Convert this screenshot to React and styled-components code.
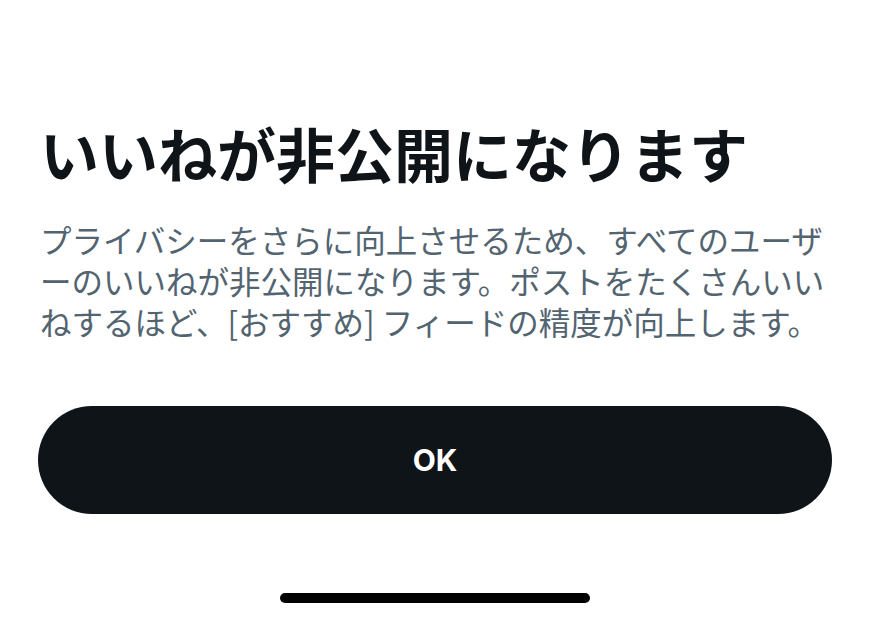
import React from 'react';
import styled, { createGlobalStyle } from 'styled-components';

const GlobalStyle = createGlobalStyle`
  html, body {
    margin: 0;
    padding: 0;
    background: #ffffff;
  }
  body {
    font-family: "Noto Sans CJK JP", "Noto Sans", sans-serif;
    -webkit-font-smoothing: antialiased;
  }
`;

const Screen = styled.div`
  width: 870px;
  height: 620px;
  box-sizing: border-box;
  padding: 117px 38px 0 40px;
  display: flex;
  flex-direction: column;
  overflow: hidden;
`;

const Title = styled.h1`
  margin: 0;
  font-size: 59px;
  line-height: 72px;
  font-weight: 700;
  color: #0f1419;
  white-space: nowrap;
`;

const Description = styled.p`
  margin: 30px 0 0;
  font-size: 31.5px;
  line-height: 41px;
  font-weight: 400;
  color: #536471;
  white-space: nowrap;
`;

const OkButton = styled.button`
  margin: 64px 0 0 -2px;
  height: 108px;
  width: 794px;
  border: none;
  border-radius: 54px;
  background: #0f1419;
  color: #ffffff;
  font-family: Inter, "Noto Sans", sans-serif;
  font-size: 30px;
  font-weight: 700;
  cursor: pointer;
`;

const HomeIndicator = styled.div`
  align-self: center;
  margin: 79px 0 0 -2px;
  width: 310px;
  height: 10px;
  border-radius: 5px;
  background: #000000;
`;

export default function App() {
  return (
    <>
      <GlobalStyle />
      <Screen>
        <Title>いいねが非公開になります</Title>
        <Description>
          プライバシーをさらに向上させるため、すべてのユーザ
          <br />
          ーのいいねが非公開になります。ポストをたくさんいい
          <br />
          ねするほど、[おすすめ] フィードの精度が向上します。
        </Description>
        <OkButton>OK</OkButton>
        <HomeIndicator />
      </Screen>
    </>
  );
}
